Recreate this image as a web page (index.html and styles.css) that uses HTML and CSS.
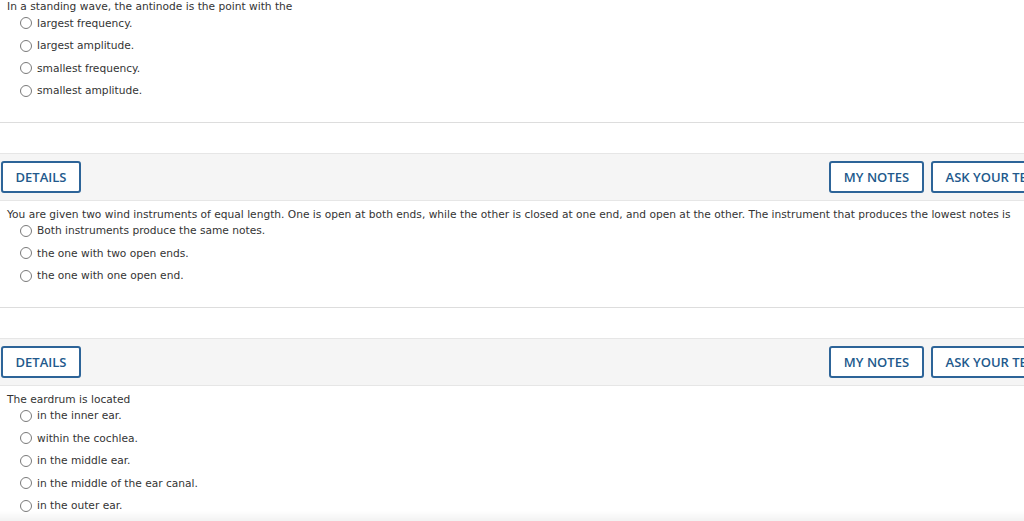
FILE: index.html
```html
<!DOCTYPE html>
<html lang="en">
<head>
<meta charset="utf-8">
<title>Questions</title>
<link rel="stylesheet" href="styles.css">
</head>
<body>
<div class="page">
  <section class="question">
    <div class="prompt">In a standing wave, the antinode is the point with the</div>
    <ul class="options">
      <li><span class="radio"></span>largest frequency.</li>
      <li><span class="radio"></span>largest amplitude.</li>
      <li><span class="radio"></span>smallest frequency.</li>
      <li><span class="radio"></span>smallest amplitude.</li>
    </ul>
  </section>
  <hr class="rule">
  <div class="bar">
    <button class="btn">DETAILS</button>
    <div class="bar-right">
      <button class="btn">MY NOTES</button>
      <button class="btn">ASK YOUR TEACHER</button>
    </div>
  </div>
  <section class="question">
    <div class="prompt">You are given two wind instruments of equal length. One is open at both ends, while the other is closed at one end, and open at the other. The instrument that produces the lowest notes is</div>
    <ul class="options">
      <li><span class="radio"></span>Both instruments produce the same notes.</li>
      <li><span class="radio"></span>the one with two open ends.</li>
      <li><span class="radio"></span>the one with one open end.</li>
    </ul>
  </section>
  <hr class="rule">
  <div class="bar">
    <button class="btn">DETAILS</button>
    <div class="bar-right">
      <button class="btn">MY NOTES</button>
      <button class="btn">ASK YOUR TEACHER</button>
    </div>
  </div>
  <section class="question">
    <div class="prompt">The eardrum is located</div>
    <ul class="options">
      <li><span class="radio"></span>in the inner ear.</li>
      <li><span class="radio"></span>within the cochlea.</li>
      <li><span class="radio"></span>in the middle ear.</li>
      <li><span class="radio"></span>in the middle of the ear canal.</li>
      <li><span class="radio"></span>in the outer ear.</li>
    </ul>
  </section>
</div>
<div class="bottom-fade"></div>
</body>
</html>
```
FILE: styles.css
```css
html, body {
  margin: 0;
  padding: 0;
  background: #ffffff;
  overflow: hidden;
}
body {
  font-family: "DejaVu Sans", Verdana, sans-serif;
  font-size: 10.65px;
  color: #333333;
}
.page {
  width: 1084px;
}
.question {
  padding: 1px 0 16px 7px;
}
.prompt {
  line-height: 12px;
  white-space: nowrap;
}
.options {
  list-style: none;
  margin: 2.5px 0 0 0;
  padding: 0 0 0 13px;
}
.options li {
  display: flex;
  align-items: center;
  height: 15px;
  margin-bottom: 7.5px;
}
.radio {
  width: 10px;
  height: 10px;
  border: 1px solid #7a7a7a;
  border-radius: 50%;
  background: #fff;
  margin-right: 5px;
  flex: none;
}
.rule {
  margin: 0;
  border: 0;
  border-top: 1px solid #dddddd;
  height: 0;
}
.bar {
  margin-top: 30px;
  background: #f5f5f5;
  border-top: 1px solid #e6e6e6;
  border-bottom: 1px solid #e6e6e6;
  padding: 7px 0 7px 1px;
  display: flex;
  justify-content: space-between;
  align-items: center;
}
.bar + .question {
  padding-top: 8px;
}
.bar-right {
  display: flex;
  gap: 7px;
}
.btn {
  height: 32px;
  box-sizing: border-box;
  padding: 0 13px;
  border: 2px solid #2d6498;
  border-radius: 3px;
  background: #ffffff;
  color: #22598c;
  font-family: "Open Sans", sans-serif;
  font-weight: 600;
  font-size: 13px;
  letter-spacing: 0;
}
.bar .btn:first-child {
  padding: 0 12.5px;
}
.bottom-fade {
  position: fixed;
  left: 0;
  right: 0;
  bottom: 0;
  height: 10px;
  background: linear-gradient(rgba(0,0,0,0), rgba(0,0,0,0.05));
}
```
